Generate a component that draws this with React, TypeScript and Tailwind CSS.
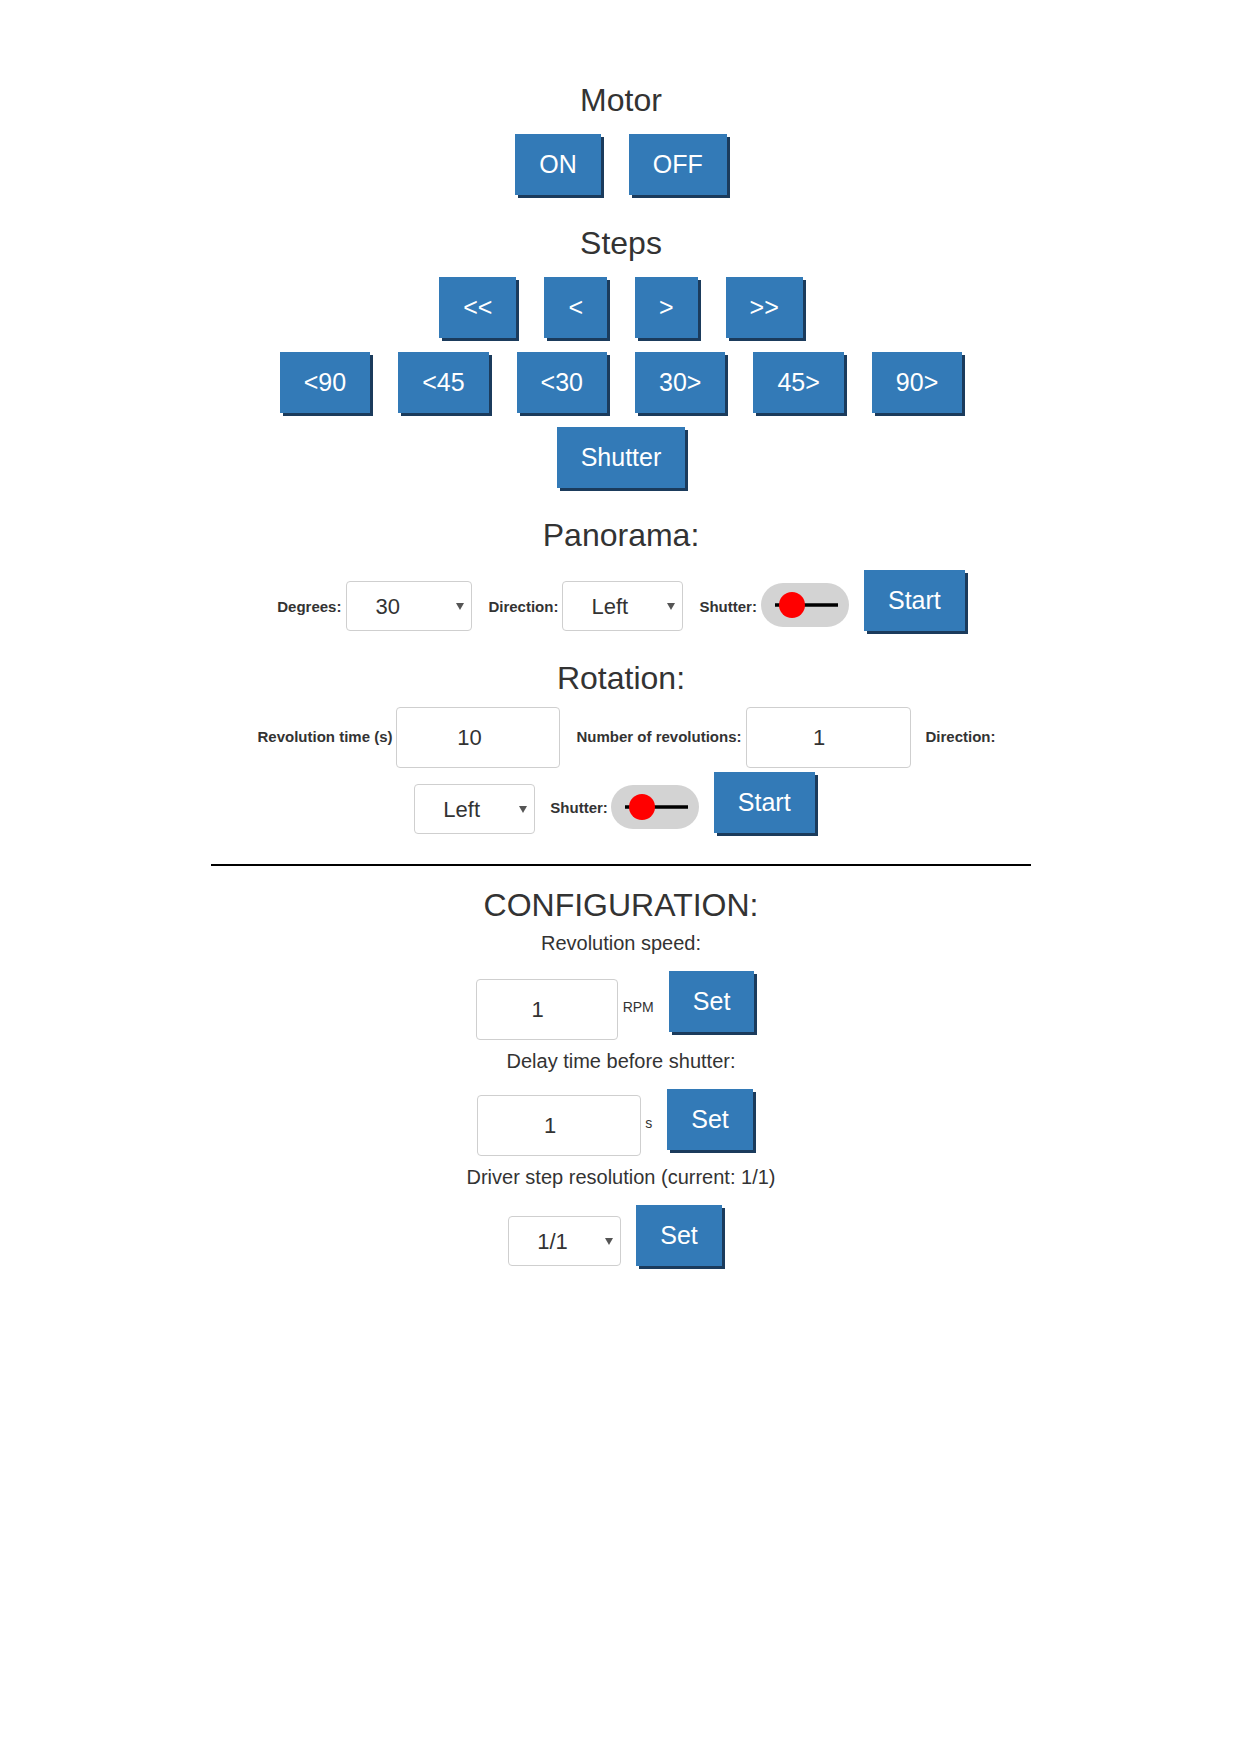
import React from "react";

function Btn({ children }: { children: React.ReactNode }) {
  return (
    <button className="bg-[#337ab7] text-white text-[25px] leading-[29px] py-4 px-6 shadow-[3px_3px_0_#1b3b5c] shrink-0">
      {children}
    </button>
  );
}

function Label({ children, className = "" }: { children: React.ReactNode; className?: string }) {
  return (
    <span className={"text-[15px] leading-[17px] font-bold text-[#333] whitespace-nowrap shrink-0 " + className}>
      {children}
    </span>
  );
}

function Select({ value, width, className = "" }: { value: string; width: string; className?: string }) {
  return (
    <div
      className={
        "h-[50px] border border-[#cfcfcf] rounded-[4px] bg-white flex items-center justify-between pl-[28px] pr-[7px] text-[22px] text-[#333] shrink-0 " +
        width +
        " " +
        className
      }
    >
      <span>{value}</span>
      <svg width="8" height="7" viewBox="0 0 8 7">
        <polygon points="0,0 8,0 4,7" fill="#555" />
      </svg>
    </div>
  );
}

function Input({ value, width, className = "" }: { value: string; width: string; className?: string }) {
  return (
    <div
      className={
        "h-[61px] border border-[#cfcfcf] rounded-[4px] bg-white flex items-center justify-center pr-[18px] text-[22px] text-[#333] shrink-0 " +
        width +
        " " +
        className
      }
    >
      {value}
    </div>
  );
}

function Toggle({ className = "" }: { className?: string }) {
  return (
    <svg width="88" height="44" viewBox="0 0 88 44" className={"shrink-0 " + className}>
      <rect x="0" y="0" width="88" height="44" rx="22" fill="#d3d3d3" />
      <line x1="14" y1="22" x2="77" y2="22" stroke="#000" strokeWidth="3.5" />
      <circle cx="31" cy="22" r="13" fill="#ff0000" />
    </svg>
  );
}

function H2({ children, className = "" }: { children: React.ReactNode; className?: string }) {
  return <h2 className={"text-[32px] leading-[36px] text-[#333] " + className}>{children}</h2>;
}

export default function App() {
  return (
    <div className="min-h-[1756px] w-full bg-white flex flex-col items-center pt-[82px] text-[#333] font-['Liberation_Sans',Arial,sans-serif]">
      <H2>Motor</H2>
      <div className="mt-4 flex gap-[28px]">
        <Btn>ON</Btn>
        <Btn>OFF</Btn>
      </div>

      <H2 className="mt-[30px]">Steps</H2>
      <div className="mt-4 flex gap-[28px]">
        <Btn>&lt;&lt;</Btn>
        <Btn>&lt;</Btn>
        <Btn>&gt;</Btn>
        <Btn>&gt;&gt;</Btn>
      </div>
      <div className="mt-[14px] flex gap-[28px]">
        <Btn>&lt;90</Btn>
        <Btn>&lt;45</Btn>
        <Btn>&lt;30</Btn>
        <Btn>30&gt;</Btn>
        <Btn>45&gt;</Btn>
        <Btn>90&gt;</Btn>
      </div>
      <div className="mt-[14px] flex">
        <Btn>Shutter</Btn>
      </div>

      <H2 className="mt-[29px]">Panorama:</H2>
      <div className="mt-[17px] flex items-start">
        <Label className="mt-[28px]">Degrees:</Label>
        <Select value="30" width="w-[126px]" className="ml-[5px] mt-[11px]" />
        <Label className="ml-[16px] mt-[28px]">Direction:</Label>
        <Select value="Left" width="w-[121px]" className="ml-[4px] mt-[11px]" />
        <Label className="ml-[16px] mt-[28px]">Shutter:</Label>
        <Toggle className="ml-[4px] mt-[13px]" />
        <div className="ml-[15px]">
          <Btn>Start</Btn>
        </div>
      </div>

      <H2 className="mt-[29px]">Rotation:</H2>
      <div className="mt-[11px] flex items-start pl-[11px]">
        <Label className="mt-[21px]">Revolution time (s)</Label>
        <Input value="10" width="w-[164px]" className="ml-[4px]" />
        <Label className="ml-[16px] mt-[21px]">Number of revolutions:</Label>
        <Input value="1" width="w-[165px]" className="ml-[4px]" />
        <Label className="ml-[15px] mt-[21px]">Direction:</Label>
      </div>
      <div className="mt-[4px] flex items-start pr-[13px]">
        <Select value="Left" width="w-[121px]" className="mt-[12px]" />
        <Label className="ml-[15px] mt-[27px]">Shutter:</Label>
        <Toggle className="ml-[3px] mt-[13px]" />
        <div className="ml-[15px]">
          <Btn>Start</Btn>
        </div>
      </div>

      <div className="mt-[30px] w-[820px] h-[2px] bg-black" />

      <H2 className="mt-[21px]">CONFIGURATION:</H2>
      <p className="mt-[9px] text-[20px] leading-[23px]">Revolution speed:</p>
      <div className="mt-[16px] flex items-start pr-[12px]">
        <Input value="1" width="w-[142px]" className="mt-[8px]" />
        <span className="ml-[5px] mt-[28px] text-[14px] leading-[16px]">RPM</span>
        <div className="ml-[15px]">
          <Btn>Set</Btn>
        </div>
      </div>
      <p className="mt-[10px] text-[20px] leading-[23px]">Delay time before shutter:</p>
      <div className="mt-[16px] flex items-start pr-[12px]">
        <Input value="1" width="w-[164px]" className="mt-[6px]" />
        <span className="ml-[4px] mt-[26px] text-[14px] leading-[16px]">s</span>
        <div className="ml-[15px]">
          <Btn>Set</Btn>
        </div>
      </div>
      <p className="mt-[10px] text-[20px] leading-[23px]">Driver step resolution (current: 1/1)</p>
      <div className="mt-[16px] flex items-start pr-[12px]">
        <Select value="1/1" width="w-[113px]" className="mt-[11px]" />
        <div className="ml-[15px]">
          <Btn>Set</Btn>
        </div>
      </div>
    </div>
  );
}
